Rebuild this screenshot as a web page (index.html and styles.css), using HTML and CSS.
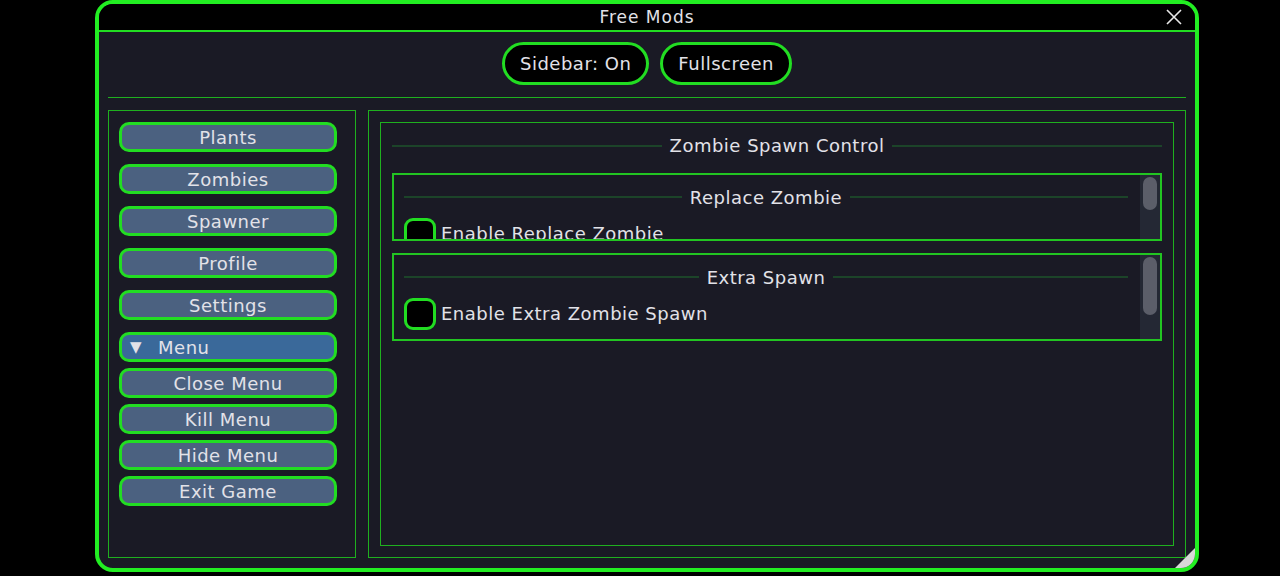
FILE: index.html
```html
<!DOCTYPE html>
<html>
<head>
<meta charset="utf-8">
<title>Free Mods</title>
<link rel="stylesheet" href="styles.css">
</head>
<body>
<div class="window">
  <div class="titlebar">
    <span class="title">Free Mods</span>
    <svg class="close" width="18" height="18" viewBox="0 0 18 18"><path d="M2 2 L16 16 M16 2 L2 16" stroke="#e8e8e8" stroke-width="1.6" fill="none"/></svg>
  </div>
  <div class="body">
    <div class="toolbar">
      <button class="pill">Sidebar: On</button>
      <button class="pill">Fullscreen</button>
    </div>
    <div class="rule"></div>
    <div class="panes">
      <div class="sidebar">
        <div class="navgroup">
          <button class="nav">Plants</button>
          <button class="nav">Zombies</button>
          <button class="nav">Spawner</button>
          <button class="nav">Profile</button>
          <button class="nav">Settings</button>
        </div>
        <div class="menugroup">
          <div class="menuhead"><span class="tri">▼</span><span>Menu</span></div>
          <button class="nav">Close Menu</button>
          <button class="nav">Kill Menu</button>
          <button class="nav">Hide Menu</button>
          <button class="nav">Exit Game</button>
        </div>
      </div>
      <div class="main">
        <div class="card">
          <div class="heading"><span class="line"></span><span class="htext">Zombie Spawn Control</span><span class="line"></span></div>
          <div class="section short">
            <div class="content">
              <div class="heading sub"><span class="line"></span><span class="htext">Replace Zombie</span><span class="line"></span></div>
              <label class="check"><span class="box"></span><span>Enable Replace Zombie</span></label>
            </div>
            <div class="scrollbar"><div class="thumb" style="height: 33px"></div></div>
          </div>
          <div class="section tall">
            <div class="content">
              <div class="heading sub"><span class="line"></span><span class="htext">Extra Spawn</span><span class="line"></span></div>
              <label class="check"><span class="box"></span><span>Enable Extra Zombie Spawn</span></label>
            </div>
            <div class="scrollbar"><div class="thumb" style="height: 58px"></div></div>
          </div>
        </div>
      </div>
    </div>
  </div>
  <div class="grip"></div>
</div>
</body>
</html>
```
FILE: styles.css
```css
* { box-sizing: border-box; }

html, body {
  margin: 0;
  background: #000;
  height: 576px;
  overflow: hidden;
}

body {
  font-family: "DejaVu Sans", sans-serif;
  color: #e2e2e8;
  font-size: 18px;
  letter-spacing: 0.5px;
}

button {
  font-family: inherit;
  font-size: inherit;
  letter-spacing: inherit;
  color: inherit;
  cursor: pointer;
}

.window {
  position: relative;
  margin-left: 95px;
  width: 1104px;
  height: 572px;
  border: 4px solid #22ee22;
  border-radius: 18px;
  overflow: hidden;
  display: flex;
  flex-direction: column;
  background: #1a1a25;
}

.titlebar {
  position: relative;
  height: 28px;
  flex: none;
  background: #000;
  border-bottom: 2px solid #22dd22;
  display: flex;
  align-items: center;
  justify-content: center;
}

.title {
  font-size: 17px;
  letter-spacing: 1px;
}

.close {
  position: absolute;
  right: 12px;
  top: 4px;
}

.body {
  flex: 1;
  display: flex;
  flex-direction: column;
  padding: 10px 9px 10px 9px;
}

.toolbar {
  display: flex;
  justify-content: center;
  gap: 11px;
}

.pill {
  height: 43px;
  padding: 0 15px;
  border: 3px solid #22dd22;
  border-radius: 22px;
  background: #000;
}

.rule {
  height: 1px;
  background: #1fb01f;
  margin: 12px 0 12px;
}

.panes {
  flex: 1;
  display: flex;
  gap: 12px;
}

.sidebar {
  width: 248px;
  border: 1px solid #1fb01f;
  padding: 11px 10px;
  display: flex;
  flex-direction: column;
  gap: 12px;
}

.navgroup {
  display: flex;
  flex-direction: column;
  gap: 12px;
}

.menugroup {
  display: flex;
  flex-direction: column;
  gap: 6px;
}

.nav, .menuhead {
  width: 218px;
  height: 30px;
  border: 3px solid #22dd22;
  border-radius: 10px;
  background: #4b6180;
  padding: 0;
}

.menuhead {
  display: flex;
  align-items: center;
  gap: 16px;
  padding-left: 8px;
  background: #3a699a;
}

.tri {
  font-size: 15px;
}

.main {
  flex: 1;
  border: 1px solid #1fb01f;
  padding: 11px;
  display: flex;
}

.card {
  flex: 1;
  border: 1px solid #1fb01f;
  padding: 11px 11px;
  display: flex;
  flex-direction: column;
}

.heading {
  display: flex;
  align-items: center;
  gap: 8px;
  height: 22px;
}

.heading .line {
  flex: 1;
  height: 2px;
  background: #1c4429;
}

.card > .heading {
  margin-bottom: 17px;
  padding-top: 1px;
}

.section {
  display: flex;
  border: 2px solid #22c422;
  overflow: hidden;
  margin-bottom: 12px;
}

.section.short { height: 68px; }
.section.tall { height: 88px; }

.content {
  flex: 1;
  padding: 11px 12px 0 10px;
}

.scrollbar {
  width: 20px;
  flex: none;
  background: #242834;
  padding: 2px 3px;
}

.thumb {
  background: #5b5e69;
  border-radius: 7px;
}

.sub {
  margin-bottom: 10px;
}

.check {
  display: flex;
  align-items: center;
  gap: 5px;
  line-height: 1;
}

.box {
  flex: none;
  width: 32px;
  height: 32px;
  border: 3px solid #22dd22;
  border-radius: 9px;
  background: #000;
}

.grip {
  position: absolute;
  right: 0;
  bottom: 0;
  width: 20px;
  height: 20px;
  background: #d8d8d8;
  clip-path: polygon(100% 0, 100% 100%, 0 100%);
}
```
